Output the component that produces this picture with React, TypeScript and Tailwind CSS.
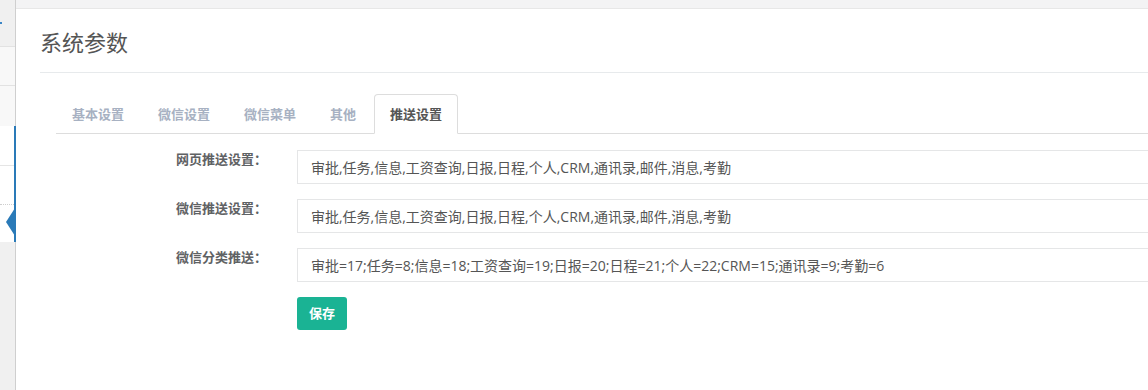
import React from "react";

const tabs = ["基本设置", "微信设置", "微信菜单", "其他", "推送设置"];

const rows = [
  {
    label: "网页推送设置：",
    value: "审批,任务,信息,工资查询,日报,日程,个人,CRM,通讯录,邮件,消息,考勤",
  },
  {
    label: "微信推送设置：",
    value: "审批,任务,信息,工资查询,日报,日程,个人,CRM,通讯录,邮件,消息,考勤",
  },
  {
    label: "微信分类推送：",
    value:
      "审批=17;任务=8;信息=18;工资查询=19;日报=20;日程=21;个人=22;CRM=15;通讯录=9;考勤=6",
  },
];

const Sidebar = () => (
  <aside className="w-[16px] shrink-0 flex flex-col bg-[#f0f0f0] border-r border-[#cfcfcf]">
    <div className="h-[47px] border-b border-[#e2e2e2] relative">
      <span className="absolute left-0 top-[22px] w-[2px] h-[2px] bg-[#3b86c6]" />
    </div>
    <div className="h-[39px] bg-[#f8f8f8] border-b border-[#e2e2e2]" />
    <div className="h-[40px] bg-[#f8f8f8]" />
    <div className="h-[116px] bg-white border-r-2 border-[#2a7ab8] -mr-px relative flex flex-col">
      <div className="h-[40px] border-b border-[#e5e5e5]" />
      <div className="h-[39px] border-b border-dotted border-[#cfcfcf]" />
      <svg
        className="absolute left-[6px] top-[82px]"
        width="9"
        height="28"
        viewBox="0 0 9 28"
      >
        <polygon points="0,14 9,0 9,28" fill="#2a7ab8" />
      </svg>
    </div>
  </aside>
);

export default function App() {
  return (
    <div className="w-[1148px] h-[390px] flex overflow-hidden bg-white font-['Open_Sans','Noto_Sans_CJK_SC',sans-serif]">
      <Sidebar />
      <main className="flex-1 min-w-0 flex flex-col overflow-hidden">
        <div className="h-[9px] shrink-0 bg-[#f3f3f4] border-b border-[#e7e7e7]" />
        <div className="pl-[24px]">
          <div className="h-[64px] border-b border-[#e7eaec] pt-[18px]">
            <h1 className="text-[22px] leading-[30px] font-normal text-[#555]">
              系统参数
            </h1>
          </div>

          <div className="pl-[16px] pt-[21px]">
            <ul className="flex border-b border-[#dddddd]">
              {tabs.map((t) => {
                const active = t === "推送设置";
                return (
                  <li key={t} className="mr-[2px] -mb-px">
                    <span
                      className={
                        active
                          ? "block h-[40px] px-[15px] leading-[38px] text-[13px] font-bold text-[#555] bg-white border border-[#dddddd] border-b-white rounded-t-[4px]"
                          : "block h-[40px] px-[15px] leading-[38px] text-[13px] font-bold text-[#a7b1c2] border border-transparent"
                      }
                    >
                      {t}
                    </span>
                  </li>
                );
              })}
            </ul>

            <form className="pt-[16px] flex flex-col gap-[15px]">
              {rows.map((r) => (
                <div key={r.label} className="flex items-start">
                  <label className="w-[211px] shrink-0 text-right text-[13px] leading-[16px] pt-[1px] font-bold text-[#5f6264]">
                    {r.label}
                  </label>
                  <div className="ml-[30px] w-[900px] shrink-0 h-[34px] border border-[#e5e6e7] px-[13px] flex items-center text-[14px] text-[#555] whitespace-nowrap">
                    {r.value}
                  </div>
                </div>
              ))}
              <div className="pl-[241px]">
                <button
                  type="button"
                  className="w-[50px] h-[33px] rounded-[3px] bg-[#1ab394] text-white text-[13px] font-bold"
                >
                  保存
                </button>
              </div>
            </form>
          </div>
        </div>
      </main>
    </div>
  );
}
